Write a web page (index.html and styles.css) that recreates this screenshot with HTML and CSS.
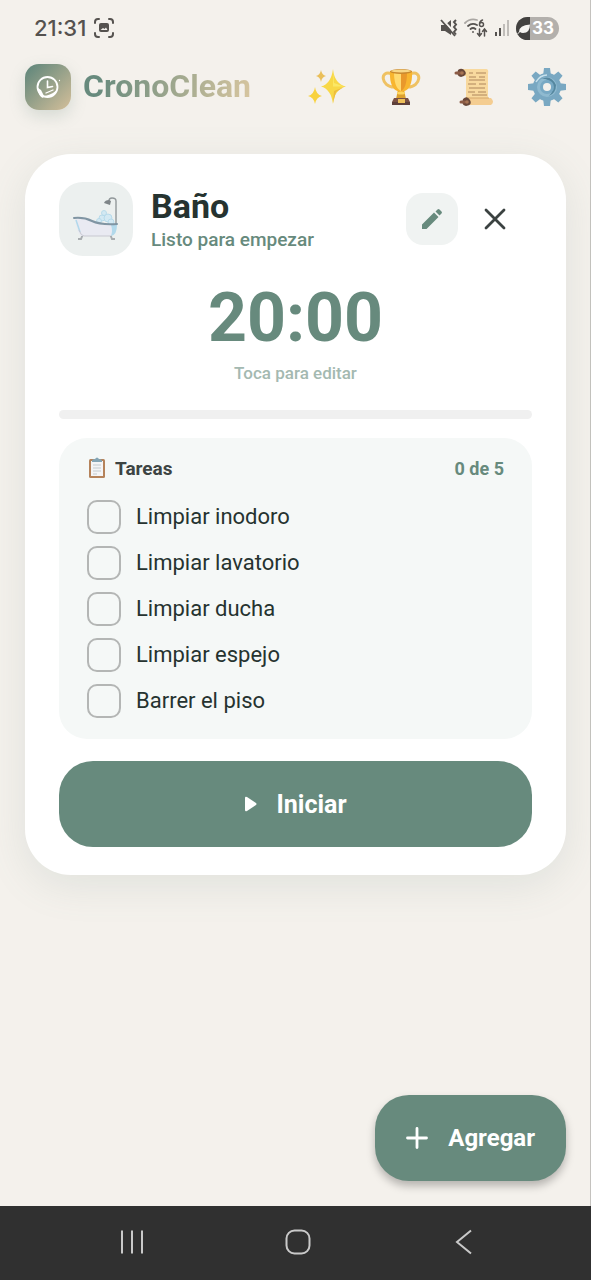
FILE: index.html
```html
<!DOCTYPE html>
<html lang="es">
<head>
<meta charset="utf-8">
<meta name="viewport" content="width=device-width, initial-scale=1">
<title>CronoClean</title>
<link rel="stylesheet" href="styles.css">
</head>
<body>
<div class="screen">
  <div class="app">
  <div class="status">
    <div class="status-side">
      <span class="clock">21:31</span>
      <svg width="20" height="20" viewBox="0 0 20 20" fill="none" stroke="#55524f" stroke-width="2" stroke-linecap="round"><path d="M1 5V4a3 3 0 0 1 3-3h1M15 1h1a3 3 0 0 1 3 3v1M19 15v1a3 3 0 0 1-3 3h-1M5 19H4a3 3 0 0 1-3-3v-1"/><rect x="5" y="5" width="10" height="9" rx="2" fill="#55524f" stroke="none"/><path d="M6.500 12l2.500-2 1.500 1 1.500-1.500 1.500 2.500z" fill="#f4f1ec" stroke="none"/></svg>
    </div>
    <div class="status-side status-icons">
      <svg width="18" height="18" viewBox="0 0 18 18" fill="none" stroke="#55524f"><path d="M1 6h4l6-5v15L5 12H1z" fill="#55524f" stroke="none"/><path d="M2 0l14 15" stroke="#f4f1ec" stroke-width="2"/><path d="M1 1l14 16" stroke-width="1.800"/><path d="M16 1l-2 2 2 2.500-2 2.500 2 2.500-2 2.500 2 2.500" stroke-width="2"/></svg>
      <svg width="24" height="20" viewBox="0 0 24 20" fill="none" stroke="#55524f" stroke-width="1.800" stroke-linecap="round"><path d="M1 5q5-5 12-3" stroke="#aaa7a3"/><path d="M4 8q4-3.500 9-1M6.500 11q2.500-2 5 0M9 14v.1"/><path d="M18.500 2q-3 1-3 4.500a2 2 0 1 0 2-2q-1.500 0-2 1.500" stroke-width="1.500"/><path d="M15.500 11v7m-2-2.500 2 2.500 2-2.500M20.500 18v-7m-2 2.500 2-2.500 2 2.500" stroke-width="1.500"/></svg>
      <svg width="16" height="18" viewBox="0 0 16 18"><path d="M1 13h2v4H1zM5 9h2v8H5z" fill="#55524f"/><path d="M9 5h2v12H9zM13 1h2v16h-2z" fill="#c0bdb9"/></svg>
      <span class="battery"><svg width="14" height="23" viewBox="0 0 14 23"><path d="M0 0h14v23H0z" fill="#42413f"/><path d="M1 17l2-2q0-7 11-7.500 0 8.500-7 8.500-2 0-3-1l-2 2z" fill="#f5f3f0"/></svg><span>33</span></span>
    </div>
  </div>

  <header class="topbar">
    <span class="logo"><svg width="26" height="26" viewBox="0 0 26 26" fill="none" stroke="#fff" stroke-linecap="round"><circle cx="12.500" cy="13" r="10" stroke-width="1.800"/><path d="M12.500 7v6.500l5-1" stroke-width="1.600"/><path d="M3 14l3 2 3 6-1 2q-5-2-5-10z" fill="#fff" stroke="none"/><path d="M22 16q-2 8-11 7-3 0-4-1 8 0 15-6z" fill="#fff" stroke="none"/><path d="M11 19l7-3M24.500 6.500v.1" stroke-width="1.300"/></svg></span>
    <h1 class="brand">CronoClean</h1>
    <nav class="actions">
      <button type="button" class="action" aria-label="Novedades"><svg width="40" height="40" viewBox="0 0 40 40"><path d="M25 2q1.500 15 13 17.500Q26.500 22 25 37 23 22 13 19.500 23 17 25 2z" fill="#f8d847"/><path d="M25 4l1 12 10 3.500H25z" fill="#fbe866"/><path d="M25 36l1-12 10-4-8 5z" fill="#edbd3e"/><path d="M7 20q1 7.500 7 9-6 1.500-7 8-1-6.500-7-8 6-1.500 7-9z" fill="#f8d23d"/><path d="M13 3q.8 5 5 6-4.200 1-5 6-.8-5-5-6 4.200-1 5-6z" fill="#eabf59"/></svg></button>
      <button type="button" class="action" aria-label="Logros"><svg width="40" height="40" viewBox="0 0 40 40"><path d="M11 7C-2 2 0 20 13 20M29 7c13-5 11 13-2 13" fill="none" stroke="#efc263" stroke-width="3"/><path d="M17 23h6l2 9H15z" fill="#dca12e"/><path d="M9 4h22q1 20-11 21Q8 24 9 4z" fill="#f8b52f"/><path d="M13 5h7v19q-7-3-7-19z" fill="#ffda70"/><path d="M20 5h6q0 16-6 19z" fill="#e9982b"/><ellipse cx="20" cy="4.500" rx="11" ry="2.500" fill="#c9892f"/><ellipse cx="20" cy="4" rx="10" ry="1.400" fill="#f8d786"/><ellipse cx="20" cy="26" rx="4" ry="1.500" fill="#ffd65e"/><path d="M13 31h14l2 4v3H11v-3z" fill="#795044"/><path d="M11 35h18v3H11z" fill="#5e403a"/><path d="M17 32h7v4h-7z" fill="#eec05a"/></svg></button>
      <button type="button" class="action" aria-label="Historial"><svg width="40" height="40" viewBox="0 0 40 40"><path d="M6 2h26q3 0 2 5v25H12V9H6z" fill="#f8d99e"/><path d="M12 31h25q4 4 0 7H9z" fill="#f4cd91"/><path d="M12 31h23" stroke="#d4a76c"/><path d="M4 3q4-3 7 1t-4 6q-5-1-3-7zM9 32q4-4 7 1t-4 6q-5-1-3-7z" fill="#68483a"/><path d="M2 6h5M7 35h4" stroke="#8b5b45" stroke-width="3" stroke-linecap="round"/><circle cx="8" cy="6" r="1.800" fill="#a87555"/><circle cx="13" cy="35" r="1.800" fill="#a87555"/><path d="M15 6h4m3 0h10M15 10h7m3 0h6M15 13h16M14 17h8m3 0h7M15 21h16M14 25h7m3 0h8M18 28h15" stroke="#ae865d"/></svg></button>
      <button type="button" class="action" aria-label="Ajustes"><svg width="40" height="40" viewBox="0 0 40 40"><g fill="#79a8c2"><circle cx="20" cy="20" r="14"/><g id="tooth"><path d="M17 1h6l1 8h-8zM16 31h8l-1 8h-6zM1 17l8-1v8l-8-1zM31 16l8 1v6l-8 1z"/></g><use href="#tooth" transform="rotate(45 20 20)"/></g><circle cx="20" cy="20" r="10" fill="#8fbad0"/><path d="M14 12q10-5 15 6 0 8-7 11 6-6 2-13-4-5-10-4z" fill="#55879f"/><circle cx="20" cy="20" r="7" fill="#78a9c4"/><path d="M9 15q4-7 11-7" stroke="#c8e1ec" stroke-width="1.500" fill="none"/><circle cx="20" cy="20" r="4" fill="#f4f1ec"/></svg></button>
    </nav>
  </header>

  <main class="content">
    <section class="card">
      <div class="card-head">
        <span class="room-icon"><svg width="46" height="46" viewBox="0 0 46 46" fill="none"><g fill="#d3e9f3" stroke="#b0d7e8" stroke-width=".8"><circle cx="29" cy="22" r="3"/><circle cx="35" cy="22" r="4"/><circle cx="31" cy="17" r="2.500"/><circle cx="26" cy="25" r="2.500"/><circle cx="38" cy="26" r="3"/></g><path d="M43 29V5q0-3-4-3-3 0-3 3" stroke="#92989b" stroke-width="1.400"/><path d="M31 7q1-3 5-3l2 1-1 4z" fill="#7f8588"/><path d="M10 38l-2 5H5M37 38l2 5h3" stroke="#a9adb0" stroke-width="2"/><path d="M2 23q3 16 6 17h29q6-2 6-12-15 3-24-3-9-3-17-2z" fill="#e9eaf2"/><path d="M38 29h6q0 10-6 11 2-5 0-11z" fill="#b2d9eb"/><path d="M3 24l4 12" stroke="#b2d9eb" stroke-width="1.500"/><path d="M6 34q2 6 5 6h26" stroke="#c7c8d1"/><path d="M1 22q10-1 18 3t25 3" stroke="#8095a3" stroke-width="2" stroke-linecap="round"/></svg></span>
        <div class="room">
          <h2 class="room-name">Baño</h2>
          <p class="room-state">Listo para empezar</p>
        </div>
        <button type="button" class="tool tool-edit" aria-label="Editar"><svg width="22" height="22" viewBox="0 0 22 22" fill="#678a7d"><path d="M1 16.500L13 4.500l4.500 4.500L5.500 21H1zM14.500 3.500L16.500 1.500q1-1 2 0l2 2q1 1 0 2l-2 2z"/></svg></button>
        <button type="button" class="tool" aria-label="Cerrar"><svg width="22" height="22" viewBox="0 0 22 22" stroke="#3b4241" stroke-width="2.800" stroke-linecap="round"><path d="M2 2l18 18M20 2L2 20"/></svg></button>
      </div>

      <button type="button" class="timer">
        <span class="time">20:00</span>
        <span class="hint">Toca para editar</span>
      </button>
      <div class="progress" role="progressbar" aria-label="Progreso" aria-valuenow="0" aria-valuemin="0" aria-valuemax="100"></div>

      <section class="tasks">
        <div class="tasks-head">
          <h3 class="tasks-title"><svg width="20" height="22" viewBox="0 0 20 22"><rect x="2" y="2" width="16" height="19" rx="1.500" fill="#b5835b"/><path d="M4 4h12v15H4z" fill="#f4f5f7"/><path d="M5 4q0-2 3-2 2-3 4 0 3 0 3 2v1H5z" fill="#84a5b5"/><path d="M6 8h8M6 11h8M6 14h8M6 17h4" stroke="#c3cbd0"/></svg>Tareas</h3>
          <span class="tasks-count">0 de 5</span>
        </div>
        <ul class="task-list">
          <li><label class="task"><input type="checkbox" class="check">Limpiar inodoro</label></li>
          <li><label class="task"><input type="checkbox" class="check">Limpiar lavatorio</label></li>
          <li><label class="task"><input type="checkbox" class="check">Limpiar ducha</label></li>
          <li><label class="task"><input type="checkbox" class="check">Limpiar espejo</label></li>
          <li><label class="task"><input type="checkbox" class="check">Barrer el piso</label></li>
        </ul>
      </section>

      <button type="button" class="primary start"><svg width="14" height="16" viewBox="0 0 14 16"><path d="M1 2q0-2 2-1l9 6q1 1 0 2l-9 6q-2 1-2-1z" fill="#fff"/></svg>Iniciar</button>
    </section>

    <button type="button" class="primary add"><svg width="22" height="22" viewBox="0 0 22 22" stroke="#fff" stroke-width="2.800" stroke-linecap="round"><path d="M11 1.500v19M1.500 11h19"/></svg>Agregar</button>
  </main>
  </div>

  <nav class="system-nav">
    <button type="button" class="system-key" aria-label="Recientes"><svg width="26" height="26" viewBox="0 0 26 26" stroke="#c9c9c9" stroke-width="2"><path d="M3 1.500v23M13 1.500v23M23 1.500v23"/></svg></button>
    <button type="button" class="system-key" aria-label="Inicio"><svg width="26" height="26" viewBox="0 0 26 26" fill="none" stroke="#c9c9c9" stroke-width="2"><rect x="1.500" y="1.500" width="23" height="23" rx="8"/></svg></button>
    <button type="button" class="system-key" aria-label="Atrás"><svg width="26" height="26" viewBox="0 0 26 26" fill="none" stroke="#c9c9c9" stroke-width="2"><path d="M20 1.500L6 13l14 11.500"/></svg></button>
  </nav>
</div>
</body>
</html>
```
FILE: styles.css
```css
* {
  box-sizing: border-box;
  margin: 0;
  padding: 0;
}

body {
  background: #f4f1ec;
  color: #263330;
  font-family: Roboto, "Liberation Sans", sans-serif;
}

button {
  border: 0;
  background: none;
  color: inherit;
  font: inherit;
}

svg {
  display: block;
  flex: none;
}

.screen {
  display: flex;
  flex-direction: column;
  min-height: 100vh;
}

.app {
  display: flex;
  flex: 1;
  flex-direction: column;
  border-right: 1px solid #c4c2be;
}

.status {
  display: flex;
  justify-content: space-between;
  align-items: center;
  height: 56px;
  padding: 0 31px 0 34px;
  color: #55524f;
}

.status-side {
  display: flex;
  align-items: center;
  gap: 8px;
}

.status-icons {
  gap: 6px;
}

.clock {
  font: 500 22px Inter, sans-serif;
}

.battery {
  display: flex;
  align-items: center;
  gap: 2px;
  height: 23px;
  padding-right: 5px;
  overflow: hidden;
  border-radius: 12px;
  background: #b3b0ac;
  color: #fff;
  font: 700 17px Inter, sans-serif;
}

.topbar {
  display: flex;
  align-items: center;
  height: 62px;
  padding: 0 23px 0 25px;
}

.logo {
  display: grid;
  place-items: center;
  width: 46px;
  height: 46px;
  border-radius: 14px;
  background: linear-gradient(135deg, #678a7d 10%, #d4bf9a);
  box-shadow: 0 6px 16px rgba(103, 138, 125, .22);
}

.brand {
  margin-left: 12px;
  padding-bottom: 2px;
  background: linear-gradient(100deg, #678a7d 10%, #d8c6a0);
  background-clip: text;
  -webkit-background-clip: text;
  color: transparent;
  font-size: 32px;
  font-weight: 700;
  line-height: 40px;
}

.actions {
  display: flex;
  gap: 33px;
  margin-left: auto;
}

.content {
  display: flex;
  flex: 1;
  flex-direction: column;
  justify-content: space-between;
  gap: 32px;
  padding: 36px 24px 25px 25px;
}

.card {
  display: flex;
  flex-direction: column;
  padding: 28px 34px;
  border-radius: 46px;
  background: #fff;
  box-shadow: 0 10px 40px rgba(103, 138, 125, .14);
}

.card-head {
  display: flex;
  align-items: center;
}

.room-icon {
  display: grid;
  place-items: center;
  width: 74px;
  height: 74px;
  border-radius: 24px;
  background: #ecf0ef;
}

.room {
  flex: 1;
  margin-left: 18px;
  padding-top: 2px;
}

.room-name {
  font-size: 34px;
  line-height: 40px;
}

.room-state {
  color: #678a7d;
  font-size: 19px;
  font-weight: 500;
  line-height: 28px;
}

.tool {
  display: grid;
  place-items: center;
  width: 74px;
  height: 52px;
}

.tool-edit {
  width: 52px;
  border-radius: 17px;
  background: #f0f3f2;
}

.timer {
  display: flex;
  flex-direction: column;
  align-items: center;
  margin-top: 22px;
}

.time {
  color: #678a7d;
  font-size: 68px;
  font-weight: 700;
  line-height: 80px;
}

.hint {
  margin-top: 3px;
  color: #a4b9b1;
  font-size: 17px;
  font-weight: 500;
  line-height: 24px;
}

.progress {
  height: 9px;
  margin-top: 25px;
  border-radius: 5px;
  background: #f0f0f0;
}

.tasks {
  margin-top: 19px;
  padding: 17px 28px 21px;
  border-radius: 28px;
  background: #f5f8f7;
}

.tasks-head {
  display: flex;
  justify-content: space-between;
  align-items: center;
  height: 26px;
}

.tasks-title {
  display: flex;
  align-items: center;
  gap: 8px;
  color: #3d4443;
  font-size: 19px;
  font-weight: 700;
}

.tasks-count {
  color: #678a7d;
  font-size: 18px;
  font-weight: 700;
}

.task-list {
  display: grid;
  gap: 12px;
  margin-top: 19px;
  list-style: none;
}

.task {
  display: flex;
  align-items: center;
  gap: 15px;
  font-size: 22px;
  line-height: 34px;
}

.check {
  width: 34px;
  height: 34px;
  appearance: none;
  border: 2px solid #b4b6b5;
  border-radius: 10px;
}

.check:checked {
  border-color: #678a7d;
  background: #678a7d;
}

.primary {
  display: flex;
  justify-content: center;
  align-items: center;
  height: 86px;
  border-radius: 34px;
  background: #678a7d;
  color: #fff;
  font-size: 25px;
  font-weight: 700;
}

.start {
  gap: 18px;
  margin-top: 22px;
}

.add {
  gap: 20px;
  align-self: flex-end;
  padding: 0 31px;
  font-size: 24px;
  box-shadow: 0 5px 8px rgba(0, 0, 0, .26);
}

.system-nav {
  display: flex;
  justify-content: center;
  align-items: center;
  gap: 140px;
  height: 74px;
  padding: 0 0 2px 5px;
  background: #303030;
}
```
